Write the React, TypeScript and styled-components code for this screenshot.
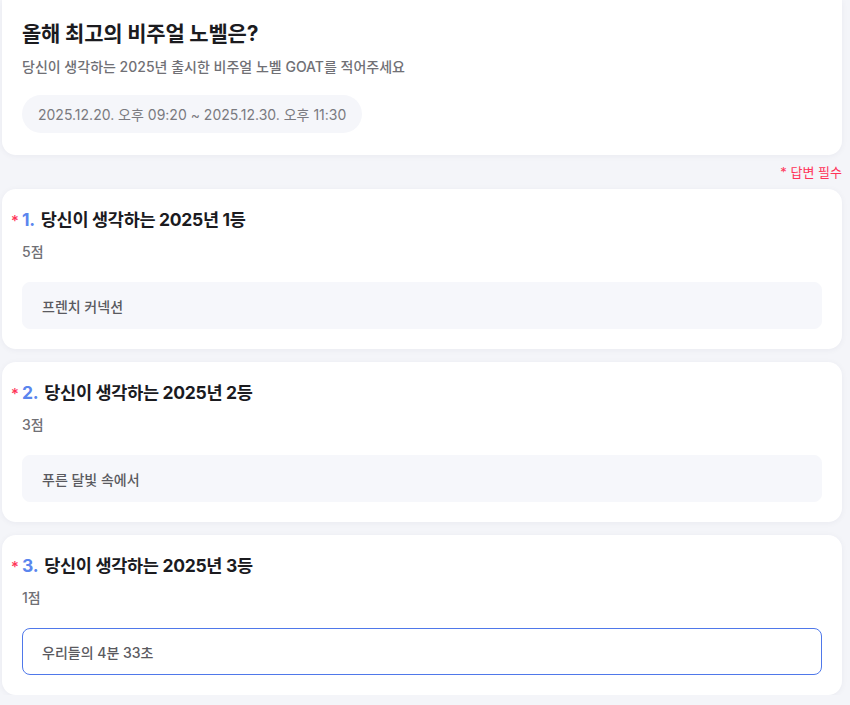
import React, { useState } from "react";
import styled, { createGlobalStyle } from "styled-components";

const GlobalStyle = createGlobalStyle`
  * { box-sizing: border-box; }
  body {
    margin: 0;
    background: #f4f5f9;
    font-family: "Inter", "Noto Sans CJK KR", "Noto Sans", sans-serif;
    color: #1b1b1f;
  }
`;

const Page = styled.div`
  width: 840px;
  margin-left: 2px;
  display: flex;
  flex-direction: column;
`;

const Card = styled.section`
  background: #ffffff;
  border-radius: 14px;
  box-shadow: 0 1px 6px rgba(30, 40, 80, 0.05);
  padding: 20px;
`;

const HeaderCard = styled(Card)`
  border-radius: 0 0 14px 14px;
  padding: 21px 20px 22px;
`;

const Title = styled.h1`
  margin: 0;
  font-size: 21px;
  line-height: 26px;
  font-weight: 700;
  letter-spacing: -0.2px;
`;

const SubTitle = styled.p`
  margin: 10px 0 0;
  font-size: 14px;
  line-height: 20px;
  font-weight: 500;
  color: #707075;
`;

const Period = styled.div`
  display: inline-flex;
  align-items: center;
  margin-top: 18px;
  height: 38px;
  padding: 0 16px;
  border-radius: 19px;
  background: #f5f6fa;
  font-size: 14px;
  color: #7a7a80;
`;

const RequiredNote = styled.div`
  align-self: flex-end;
  margin: 9px 0 8px;
  font-size: 13px;
  line-height: 17px;
  color: #ff3358;
`;

const List = styled.div`
  display: flex;
  flex-direction: column;
  gap: 13px;
`;

const QuestionTitle = styled.h2`
  position: relative;
  margin: 0;
  font-size: 17.5px;
  line-height: 22px;
  font-weight: 700;
  letter-spacing: -0.3px;
`;

const Star = styled.span`
  position: absolute;
  left: -11px;
  top: 1px;
  font-size: 15px;
  font-weight: 500;
  color: #ff3358;
`;

const Num = styled.span`
  color: #5a86ee;
  margin-right: 6px;
`;

const Score = styled.div`
  margin-top: 11px;
  font-size: 14px;
  line-height: 20px;
  font-weight: 500;
  color: #707075;
`;

const Answer = styled.input<{ $active?: boolean }>`
  display: block;
  width: 100%;
  height: 47px;
  margin-top: 20px;
  padding: 0 19px;
  border-radius: 8px;
  border: 1px solid ${(p) => (p.$active ? "#4f78ea" : "#f6f7fb")};
  background: ${(p) => (p.$active ? "#ffffff" : "#f6f7fb")};
  font-family: inherit;
  font-size: 14px;
  font-weight: 500;
  color: #5a5a60;
  outline: none;
  caret-color: #333;
`;

const questions = [
  { id: 1, title: "당신이 생각하는 2025년 1등", score: "5점", answer: "프렌치 커넥션" },
  { id: 2, title: "당신이 생각하는 2025년 2등", score: "3점", answer: "푸른 달빛 속에서" },
  { id: 3, title: "당신이 생각하는 2025년 3등", score: "1점", answer: "우리들의 4분 33초" },
];

const App = () => {
  const [answers, setAnswers] = useState<string[]>(questions.map((q) => q.answer));

  return (
    <>
      <GlobalStyle />
      <Page>
        <HeaderCard>
          <Title>올해 최고의 비주얼 노벨은?</Title>
          <SubTitle>당신이 생각하는 2025년 출시한 비주얼 노벨 GOAT를 적어주세요</SubTitle>
          <Period>2025.12.20. 오후 09:20 ~ 2025.12.30. 오후 11:30</Period>
        </HeaderCard>
        <RequiredNote>* 답변 필수</RequiredNote>
        <List>
          {questions.map((q, i) => (
            <Card key={q.id}>
              <QuestionTitle>
                <Star>*</Star>
                <Num>{q.id}.</Num>
                {q.title}
              </QuestionTitle>
              <Score>{q.score}</Score>
              <Answer
                $active={i === questions.length - 1}
                autoFocus={i === questions.length - 1}
                value={answers[i]}
                onChange={(e) => {
                  const next = answers.slice();
                  next[i] = e.target.value;
                  setAnswers(next);
                }}
              />
            </Card>
          ))}
        </List>
      </Page>
    </>
  );
};

export default App;
